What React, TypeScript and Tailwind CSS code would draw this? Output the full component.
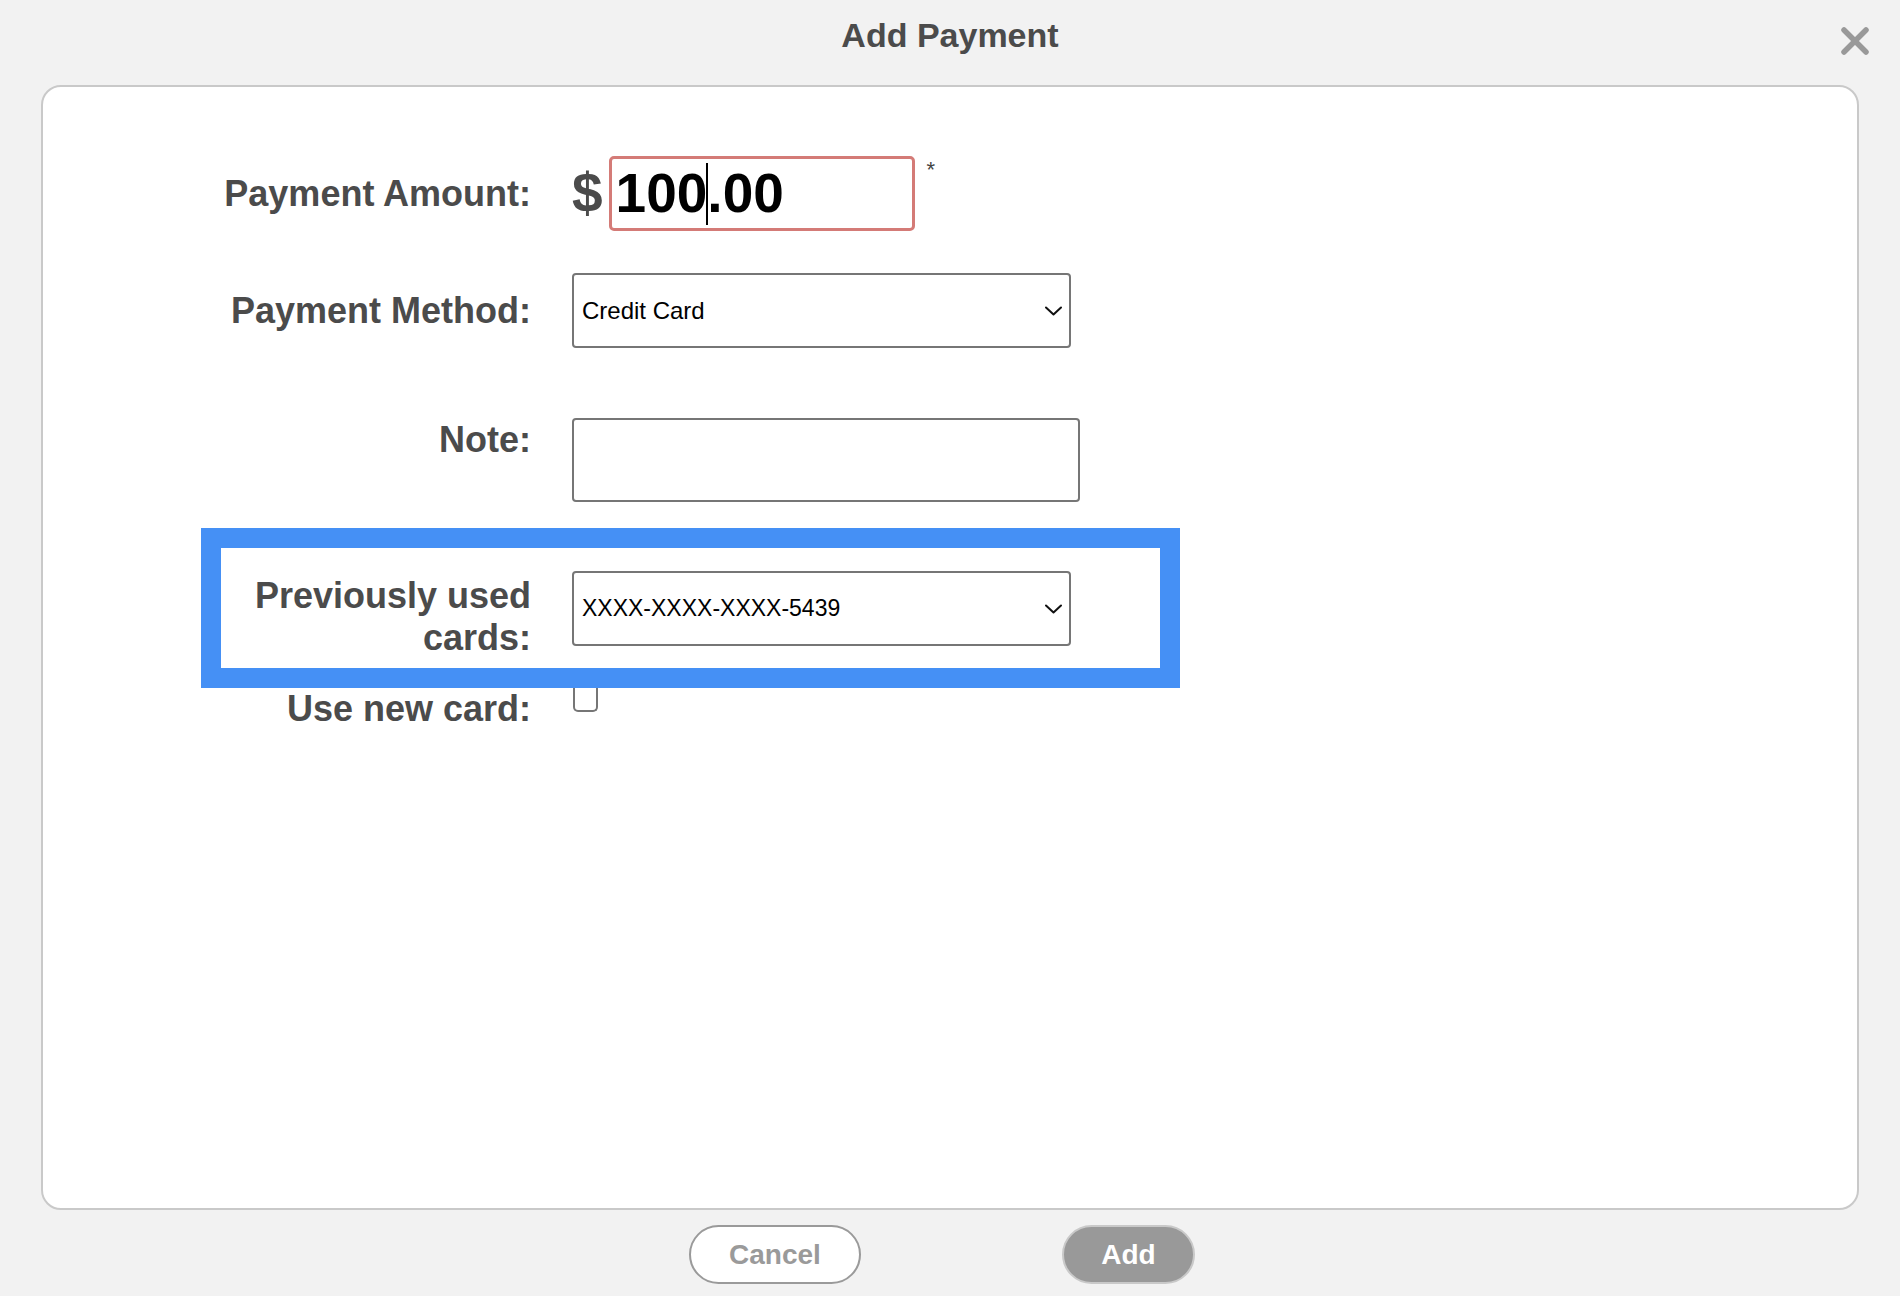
import React from 'react';

const labelCls = "text-right font-bold text-[36px] leading-[42px] text-[#4b4b4b]";

const Chevron: React.FC = () => (
  <svg width="17" height="10" viewBox="0 0 17 10" fill="none" className="shrink-0">
    <polyline points="1,1.5 8.5,8.5 16,1.5" stroke="#111" strokeWidth="2" strokeLinecap="round" strokeLinejoin="round" />
  </svg>
);

const SelectBox: React.FC<{ value: string; size: string }> = ({ value, size }) => (
  <div className="w-[499px] h-[75px] border-2 border-[#767676] rounded-[4px] bg-white flex items-center justify-between pl-[8px] pr-[7px]">
    <span className={`${size} text-black`}>{value}</span>
    <Chevron />
  </div>
);

const App: React.FC = () => {
  return (
    <div className="min-h-screen w-full bg-[#f2f2f2] font-['Liberation_Sans',Arial,sans-serif] overflow-hidden">
      {/* header */}
      <div className="grid grid-cols-[1fr_auto_1fr] h-[85px]">
        <div />
        <h1 className="pt-[15px] text-[34px] leading-[40px] font-bold text-[#4b4b4b]">Add Payment</h1>
        <div className="flex justify-end pt-[27px] pr-[31px]">
          <svg width="28" height="28" viewBox="0 0 28 28">
            <line x1="3" y1="3" x2="25" y2="25" stroke="#999" strokeWidth="5.5" strokeLinecap="round" />
            <line x1="25" y1="3" x2="3" y2="25" stroke="#999" strokeWidth="5.5" strokeLinecap="round" />
          </svg>
        </div>
      </div>

      {/* card */}
      <div className="mx-[41px] h-[1125px] bg-white border-2 border-[#c9c9c9] rounded-[20px] pt-[69px]">
        {/* amount */}
        <div className="flex items-center h-[75px]">
          <div className={`${labelCls} w-[488px]`}>Payment Amount:</div>
          <div className="ml-[41px] flex items-center">
            <span className="text-[55px] leading-none font-bold text-[#4b4b4b] mr-[6px]">$</span>
            <div className="w-[306px] h-[75px] border-[3px] border-[#d47b77] rounded-[5px] flex items-center pl-[4px]">
              <span className="text-[55px] leading-none font-bold text-black flex items-center">
                100<span className="inline-block w-[2px] h-[62px] bg-black -mx-px" />.00
              </span>
            </div>
            <span className="self-start mt-[3px] ml-[12px] text-[22px] leading-none text-[#444]">*</span>
          </div>
        </div>

        {/* method */}
        <div className="flex items-center h-[75px] mt-[42px]">
          <div className={`${labelCls} w-[488px]`}>Payment Method:</div>
          <div className="ml-[41px]">
            <SelectBox value="Credit Card" size="text-[24px]" />
          </div>
        </div>

        {/* note */}
        <div className="flex items-start mt-[70px]">
          <div className={`${labelCls} w-[488px] mt-[1px]`}>Note:</div>
          <div className="ml-[41px] w-[508px] h-[84px] border-2 border-[#767676] rounded-[4px] bg-white" />
        </div>

        {/* highlighted: previously used cards */}
        <div className="relative z-10 ml-[158px] mt-[26px] w-[979px] h-[160px] border-[20px] border-[#4590f5] bg-white flex items-start pt-[23px]">
          <div className={`${labelCls} w-[310px] mt-[4px]`}>
            Previously used<br />cards:
          </div>
          <div className="ml-[41px]">
            <SelectBox value="XXXX-XXXX-XXXX-5439" size="text-[23px]" />
          </div>
        </div>

        {/* use new card */}
        <div className="flex items-start">
          <div className={`${labelCls} w-[488px]`}>Use new card:</div>
          <div className="ml-[42px] w-[25px] h-[24px] border-2 border-t-0 border-[#767676] rounded-b-[5px] bg-white" />
        </div>
      </div>

      {/* footer buttons */}
      <div className="flex mt-[15px]">
        <button className="ml-[689px] w-[172px] h-[59px] rounded-full border-2 border-[#9a9a9a] bg-white text-[28px] font-bold text-[#9a9a9a]">
          Cancel
        </button>
        <button className="ml-[201px] w-[133px] h-[59px] rounded-full border-2 border-[#c9c9c9] bg-[#999999] text-[28px] font-bold text-white">
          Add
        </button>
      </div>
    </div>
  );
};

export default App;
